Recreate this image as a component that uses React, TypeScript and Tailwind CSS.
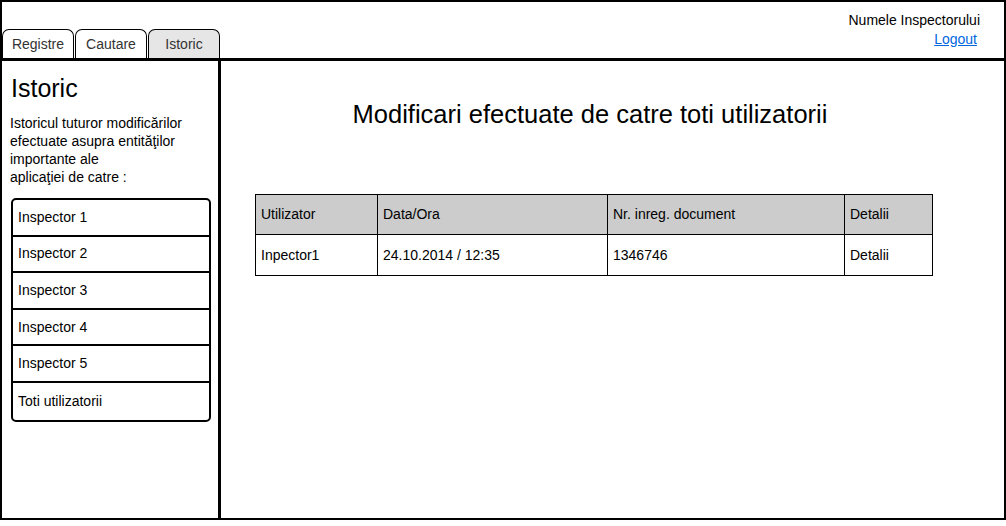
import React from "react";

const font = { fontFamily: '"Liberation Sans", Arial, sans-serif' };

function Tab({ label, active }: { label: string; active?: boolean }) {
  return (
    <div
      className={`w-[72px] h-[29px] border-[1.5px] border-b-0 border-black rounded-t-[7px] flex items-center justify-center text-[14px] text-[#333333] pt-[1px] ${
        active ? "bg-[#e6e6e6]" : "bg-white"
      }`}
    >
      {label}
    </div>
  );
}

export default function App() {
  const inspectors = ["Inspector 1", "Inspector 2", "Inspector 3", "Inspector 4", "Inspector 5", "Toti utilizatorii"];
  return (
    <div className="w-[1006px] h-[526px] bg-white" style={font}>
      <div className="w-[1006px] h-[520px] border-2 border-black flex flex-col text-black">
        <div className="h-[59px] flex justify-between border-b-[3px] border-black shrink-0">
          <div className="flex items-end gap-[1px]">
            <Tab label="Registre" />
            <Tab label="Cautare" />
            <Tab label="Istoric" active />
          </div>
          <div className="flex flex-col items-end pr-[24px] pt-[9px] text-[14px] leading-[19px]">
            <span>Numele Inspectorului</span>
            <a href="#" className="text-[#0066dd] underline mr-[3px]">Logout</a>
          </div>
        </div>
        <div className="flex flex-1 min-h-0">
          <div className="w-[219px] border-r-[3px] border-black shrink-0 pl-[8px] pr-[6px]">
            <div className="text-[25px] leading-[28px] mt-[13px] ml-[1px]">Istoric</div>
            <div className="text-[14px] leading-[18px] mt-[12px] w-[200px]">
              Istoricul tuturor modificărilor efectuate asupra entităţilor importante ale
              <br />
              aplicaţiei de catre :
            </div>
            <div className="mt-[12px] ml-[1px] w-[200px] border-2 border-black rounded-[5px] overflow-hidden">
              {inspectors.map((n, i) => (
                <div
                  key={n}
                  className={`h-[36.6px] flex items-center pl-[5px] text-[14px] ${
                    i < inspectors.length - 1 ? "border-b-2 border-black" : ""
                  }`}
                >
                  {n}
                </div>
              ))}
            </div>
          </div>
          <div className="flex-1">
            <div className="ml-[34px] w-[678px]">
              <div className="text-center text-[25.5px] leading-[28px] mt-[39px] pr-[8px]">
                Modificari efectuate de catre toti utilizatorii
              </div>
              <table className="mt-[66px] w-[678px] border-collapse text-[14px]">
                <tbody>
                  <tr className="bg-[#cccccc] h-[40px]">
                    <td className="border border-black pl-[5px] w-[122px]">Utilizator</td>
                    <td className="border border-black pl-[5px] w-[230px]">Data/Ora</td>
                    <td className="border border-black pl-[5px] w-[237px]">Nr. inreg. document</td>
                    <td className="border border-black pl-[5px]">Detalii</td>
                  </tr>
                  <tr className="h-[41px]">
                    <td className="border border-black pl-[5px]">Inpector1</td>
                    <td className="border border-black pl-[5px]">24.10.2014 / 12:35</td>
                    <td className="border border-black pl-[5px]">1346746</td>
                    <td className="border border-black pl-[5px]">Detalii</td>
                  </tr>
                </tbody>
              </table>
            </div>
          </div>
        </div>
      </div>
    </div>
  );
}
